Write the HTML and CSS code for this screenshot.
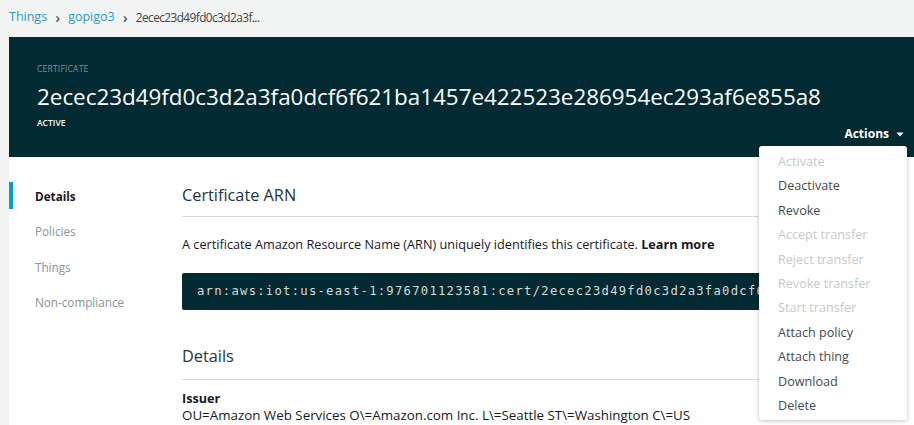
FILE: index.html
```html
<!DOCTYPE html>
<html>
<head>
<meta charset="utf-8">
<link rel="stylesheet" href="styles.css">
</head>
<body>
<nav class="crumbs">
  <a class="crumb-link">Things</a>
  <span class="sep">›</span>
  <a class="crumb-link">gopigo3</a>
  <span class="sep">›</span>
  <span class="crumb-current">2ecec23d49fd0c3d2a3f...</span>
</nav>
<div class="panel">
  <header class="hero">
    <div class="hero-left">
      <div class="kicker">CERTIFICATE</div>
      <h1 class="cert-id">2ecec23d49fd0c3d2a3fa0dcf6f621ba1457e422523e286954ec293af6e855a8</h1>
      <div class="status">ACTIVE</div>
    </div>
    <div class="hero-right">
      <button class="actions-btn">Actions <svg class="caret" width="8" height="5" viewBox="0 0 8 5"><path d="M0.5 0.5h7L4 4.5z" fill="#fff"/></svg></button>
    </div>
  </header>
  <div class="body">
    <aside class="side">
      <div class="side-item active">Details</div>
      <div class="side-item">Policies</div>
      <div class="side-item">Things</div>
      <div class="side-item">Non-compliance</div>
    </aside>
    <main class="main">
      <h2 class="section-title">Certificate ARN</h2>
      <p class="desc">A certificate Amazon Resource Name (ARN) uniquely identifies this certificate. <b>Learn more</b></p>
      <div class="arn"><span class="arn-text">arn:aws:iot:us-east-1:976701123581:cert/2ecec23d49fd0c3d2a3fa0dcf6f621ba1457e422523e286954ec293af6e855a8</span></div>
      <h2 class="section-title details-title">Details</h2>
      <div class="field-label">Issuer</div>
      <div class="field-value">OU=Amazon Web Services O\=Amazon.com Inc. L\=Seattle ST\=Washington C\=US</div>
    </main>
  </div>
</div>
<ul class="menu">
  <li class="menu-item disabled">Activate</li>
  <li class="menu-item">Deactivate</li>
  <li class="menu-item">Revoke</li>
  <li class="menu-item disabled">Accept transfer</li>
  <li class="menu-item disabled">Reject transfer</li>
  <li class="menu-item disabled">Revoke transfer</li>
  <li class="menu-item disabled">Start transfer</li>
  <li class="menu-item">Attach policy</li>
  <li class="menu-item">Attach thing</li>
  <li class="menu-item">Download</li>
  <li class="menu-item">Delete</li>
</ul>
</body>
</html>
```

FILE: styles.css
```css
* { box-sizing: border-box; }
html, body {
  margin: 0;
  padding: 0;
  background: #f2f3f3;
  font-family: "Open Sans", "Noto Sans", sans-serif;
  color: #16191f;
  overflow: hidden;
}
.crumbs {
  height: 37px;
  padding: 0 9px 3px;
  display: flex;
  align-items: center;
  gap: 8px;
  font-size: 12.5px;
  line-height: 18px;
}
.crumb-link { color: #2a9cc4; }
.sep { color: #545b64; font-size: 15px; font-weight: 600; }
.crumb-current { color: #444; font-size: 11.8px; letter-spacing: -0.55px; }
.panel {
  margin-left: 9px;
  background: #fff;
  min-height: 388px;
}
.hero {
  height: 120px;
  background: #022a33;
  display: flex;
  justify-content: space-between;
  padding: 26px 0 0 28px;
}
.kicker {
  font-size: 8.5px;
  line-height: 12px;
  color: #7e9196;
  letter-spacing: 0.2px;
}
.cert-id {
  margin: 7px 0 0;
  font-size: 22.4px;
  line-height: 30px;
  font-weight: 400;
  color: #fff;
}
.status {
  margin-top: 5px;
  font-size: 8.5px;
  line-height: 12px;
  color: #fff;
  font-weight: 600;
}
.hero-right {
  display: flex;
  align-items: flex-end;
  padding: 0 10px 15px 0;
}
.actions-btn {
  background: none;
  border: 0;
  padding: 0;
  color: #fff;
  font-family: inherit;
  font-size: 12px;
  font-weight: 700;
  line-height: 16px;
  display: flex;
  align-items: center;
  gap: 7px;
}
.body {
  display: flex;
}
.side {
  width: 173px;
  padding-top: 25px;
  flex: none;
}
.side-item {
  height: 27px;
  margin-bottom: 8.5px;
  display: flex;
  align-items: center;
  padding-left: 22px;
  font-size: 11.7px;
  color: #879596;
  border-left: 4px solid transparent;
}
.side-item.active {
  border-left-color: #00a1c9;
  color: #16191f;
  font-weight: 700;
}
.main {
  flex: 1;
  padding: 27px 20px 0 0;
  min-width: 0;
}
.section-title {
  margin: 0;
  font-size: 16.3px;
  line-height: 22px;
  font-weight: 400;
  color: #23363d;
  padding-bottom: 10px;
  border-bottom: 1px solid #d5dbdb;
}
.desc {
  margin: 18px 0 0;
  font-size: 12.7px;
  line-height: 18px;
  color: #16191f;
}
.desc b { font-weight: 700; }
.arn {
  margin-top: 20px;
  height: 37px;
  background: #022a33;
  border-radius: 2px;
  color: #d5dbdb;
  font-family: "DejaVu Sans Mono", monospace;
  font-size: 12.2px;
  letter-spacing: 1.27px;
  line-height: 37px;
  padding-left: 15px;
  white-space: nowrap;
  overflow: hidden;
}
.details-title {
  margin-top: 35px;
  padding-bottom: 12px;
}
.field-label {
  margin-top: 11px;
  font-size: 12.6px;
  line-height: 16px;
  font-weight: 700;
  color: #16191f;
}
.field-value {
  font-size: 13.35px;
  line-height: 16px;
  color: #16191f;
}
.menu {
  position: absolute;
  left: 759px;
  top: 146px;
  width: 148px;
  margin: 0;
  padding: 4px 0 2px;
  list-style: none;
  background: #fff;
  border-radius: 3px;
  box-shadow: 0 1px 4px rgba(0,0,0,0.25);
}
.menu-item {
  height: 24.4px;
  line-height: 24.4px;
  padding-left: 19px;
  font-size: 12.6px;
  color: #444b4e;
}
.menu-item.disabled { color: #c4cacb; }
```
